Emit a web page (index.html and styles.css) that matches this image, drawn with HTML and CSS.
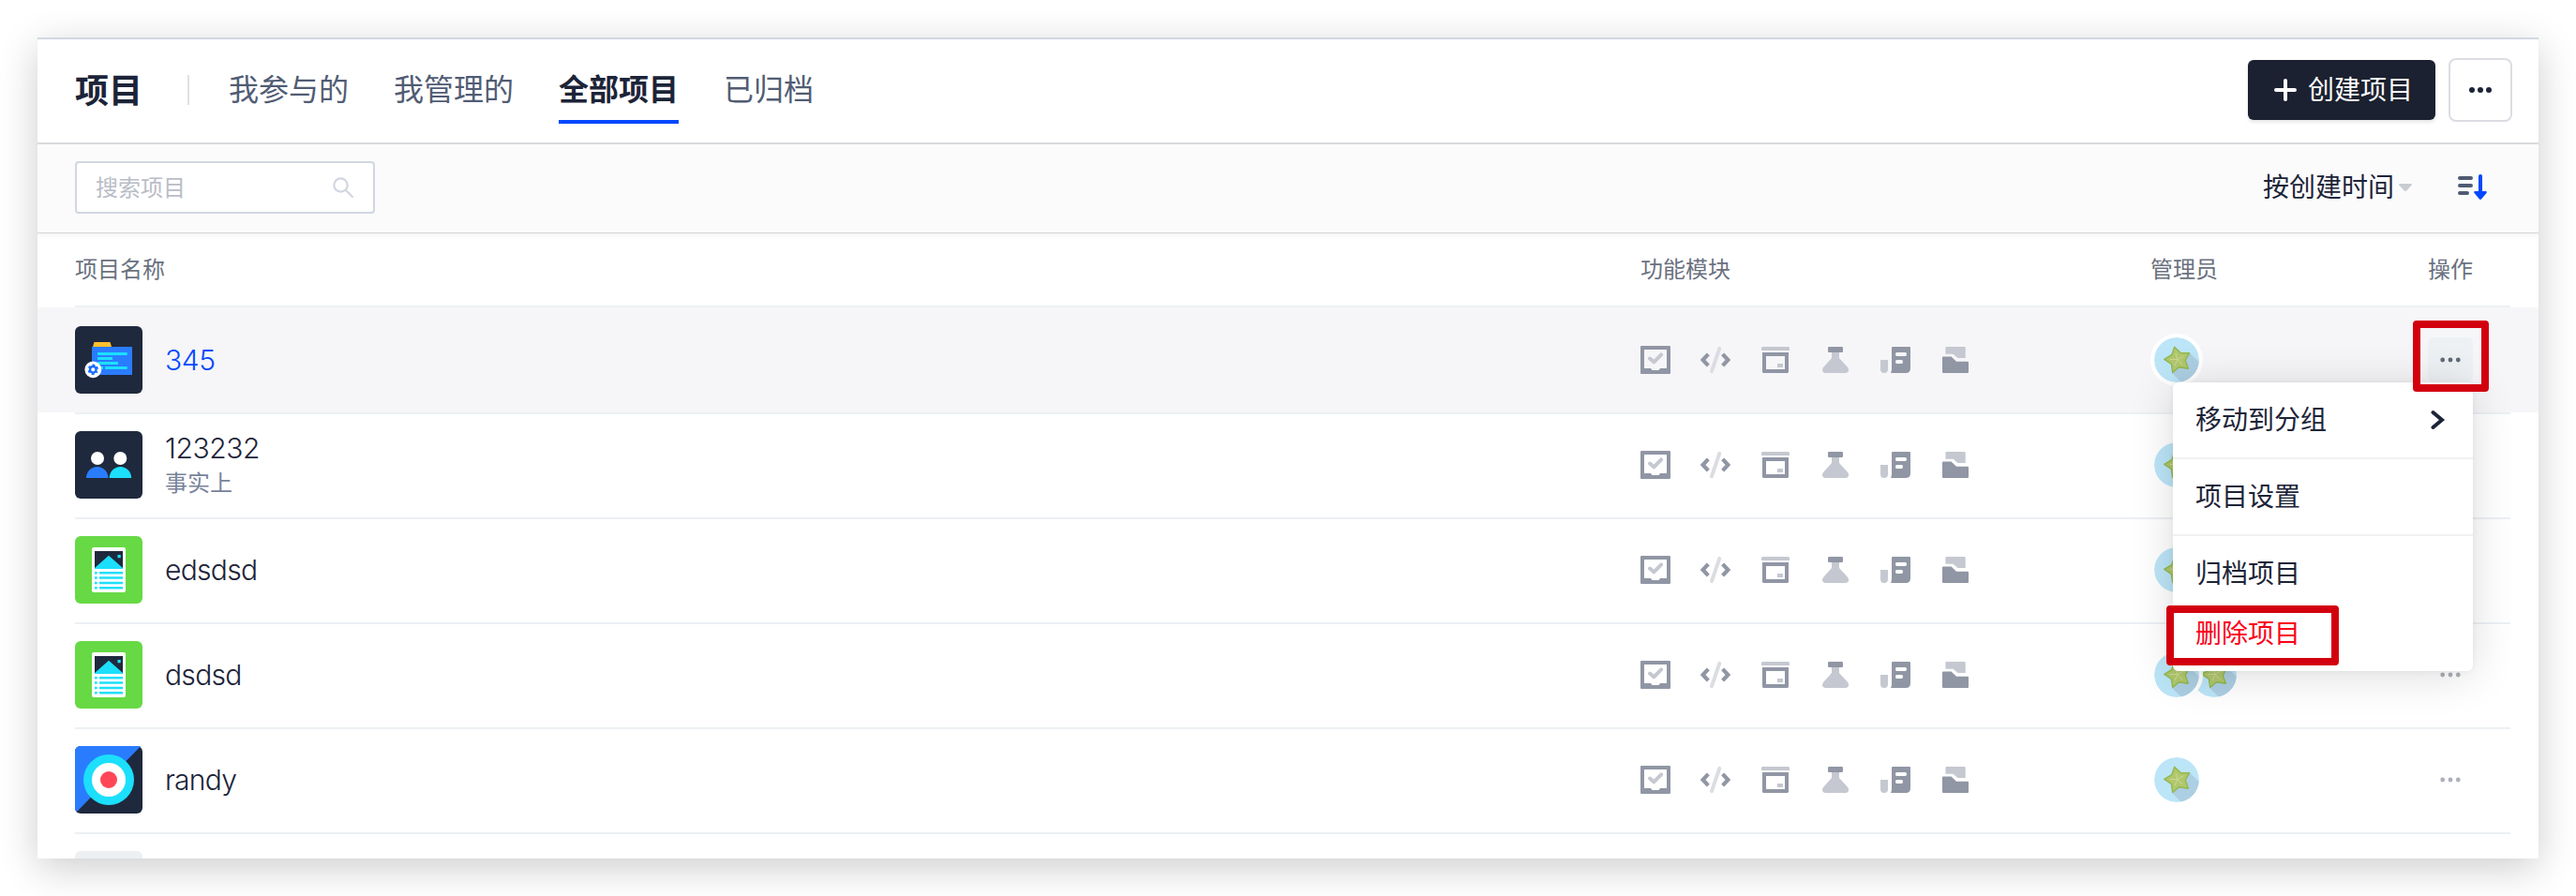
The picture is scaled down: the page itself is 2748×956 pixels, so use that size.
FILE: index.html
```html
<!DOCTYPE html>
<html lang="zh-CN">
<head>
<meta charset="utf-8">
<title>项目</title>
<link rel="stylesheet" href="styles.css">
</head>
<body>
<svg class="defs" aria-hidden="true">
  <symbol id="modules" viewBox="0 0 352 32">
    <g>
      <path class="dark" fill-rule="evenodd" d="M1 1H31Q32 1 32 2V30Q32 31 31 31H1Q0 31 0 30V2Q0 1 1 1ZM4 5V25H11L12.5 27H19.5L21 25H28V5Z"/>
      <path class="light-line" d="M10 14.5L14.3 18.3L22.2 10.3"/>
    </g>
    <g transform="translate(64 0)">
      <path class="slash" d="M20.3 3.8L12 28.2"/>
      <path class="dark-line" d="M8.3 9.8L2.6 16L8.3 22.2M23.7 9.8L29.4 16L23.7 22.2"/>
    </g>
    <g transform="translate(128 0)">
      <path class="light" d="M2 2H30L31 3V6H1V3Z"/>
      <path class="dark" fill-rule="evenodd" d="M2 8H30V29L29 30H3L2 29ZM6 12V26H26V12Z"/>
      <path class="light" d="M18 20H24V24H18Z"/>
    </g>
    <g transform="translate(192 0)">
      <path class="light" d="M12 8H20V14L29.4 24.3Q31 27 29.3 29Q28 30 26.5 30H5.5Q4 30 2.8 29Q1.200 27 2.8 24.3L12 14Z"/>
      <rect class="dark" x="8" y="2" width="16" height="6" rx="1.200"/>
    </g>
    <g transform="translate(256 0)">
      <path class="light" d="M0 16H8V26Q8 30 4 30T0 26Z"/>
      <path class="dark" fill-rule="evenodd" d="M13 2H31Q32 2 32 3V25Q32 30 27 30H11Q12 28 12 26V3Q12 2 13 2ZM17.500 8Q16 8 16 10T17.500 12H26.500Q28 12 28 10T26.500 8ZM17.500 16Q16 16 16 18T17.500 20H22.500Q24 20 24 18T22.500 16Z"/>
    </g>
    <g transform="translate(320 0)">
      <path class="light" d="M6.500 2H25.500Q26.700 2 26.700 3V14H18.500L13.500 9.800H5.400V3Q5.400 2 6.500 2Z"/>
      <path class="dark" d="M3 12.500H11.500L17 17.700H29Q30 17.700 30 18.700V29Q30 30 29 30H3Q2 30 2 29V13.500Q2 12.500 3 12.500Z"/>
    </g>
  </symbol>
  <symbol id="carambola" viewBox="0 0 48 48">
    <circle cx="24" cy="24" r="24" fill="#bce5f8"/>
    <path d="M38 16.500L47.900 26A24 24 0 0 1 28.500 47.600L19.500 38.200Z" fill="#adcfe3"/>
    <path d="M21.700 10.200L28.200 16.500L37.500 16.700L33.300 24.500L36.300 33.300L26.500 31.800L19.700 37.500L18.400 28.500L10.800 23.300L18.700 18.700Z" fill="#b1c76d" stroke="#91b84c" stroke-width="1.400" stroke-linejoin="round"/>
    <path d="M25 23.500L23 17M25 23.500L31 20M25 23.500L30 29M25 23.500L22 30M25 23.500L17 23.500" stroke="#ccd995" stroke-width="1"/>
  </symbol>
  <symbol id="report" viewBox="0 0 72 72">
    <rect width="72" height="72" rx="6" fill="#67d945"/>
    <rect x="18" y="12" width="36" height="48" rx="2" fill="#fff"/>
    <path d="M21 16H51V35H21Z" fill="#1f293d"/>
    <path d="M36 20.700L51 34V35H21V34ZM45.500 20H48.700V23.200H45.500Z" fill="#1cdffc"/>
    <path d="M21 39.200H23.700M26 39.200H51M21 44.500H23.700M26 44.500H51M21 49.900H23.700M26 49.900H51M21 55.200H23.700M26 55.200H51" stroke="#1cdffc" stroke-width="2.500"/>
  </symbol>
  <symbol id="dots" viewBox="0 0 48 48">
    <circle cx="15.700" cy="24" r="2.400"/><circle cx="24" cy="24" r="2.400"/><circle cx="32.300" cy="24" r="2.400"/>
  </symbol>
</svg>

<main class="window">
  <header class="header">
    <h1 class="title">项目</h1>
    <span class="divider"></span>
    <nav class="tabs">
      <a class="tab">我参与的</a>
      <a class="tab">我管理的</a>
      <a class="tab active">全部项目</a>
      <a class="tab">已归档</a>
    </nav>
    <button class="create">
      <svg width="24" height="24" viewBox="0 0 24 24"><path d="M2 12H22M12 2V22" stroke="#fff" stroke-width="4" stroke-linecap="round"/></svg>
      <span>创建项目</span>
    </button>
    <button class="more">
      <svg width="24" height="6" viewBox="0 0 24 6"><circle cx="3" cy="3" r="3"/><circle cx="12" cy="3" r="3"/><circle cx="21" cy="3" r="3"/></svg>
    </button>
  </header>

  <section class="toolbar">
    <div class="search">
      <span>搜索项目</span>
      <svg width="24" height="24" viewBox="0 0 24 24"><circle cx="9.500" cy="9.500" r="7.200"/><path d="M15 15L22 22"/></svg>
    </div>
    <div class="sort">
      <span>按创建时间</span>
      <svg class="caret" width="14" height="8" viewBox="0 0 14 8"><path d="M1 0H13Q14.500 .5 13.500 1.700L8.200 7.500Q7 8.400 5.800 7.500L.5 1.700Q-.5 .5 1 0Z"/></svg>
      <svg class="order" width="32" height="28" viewBox="0 0 32 28">
        <path d="M2 4H14M2 12H14M2 20H10" stroke="#4f5b73" stroke-width="4" stroke-linecap="round"/>
        <path d="M24 2V22" stroke="#0348ff" stroke-width="4" stroke-linecap="round"/>
        <path d="M18 18H30Q31.500 18.500 30.500 20L25.200 26.300Q24 27.500 22.800 26.300L17.500 20Q16.500 18.500 18 18Z" fill="#0348ff"/>
      </svg>
    </div>
  </section>

  <section class="table">
    <div class="thead">
      <span>项目名称</span><span>功能模块</span><span>管理员</span><span>操作</span>
    </div>

    <div class="row hover">
      <div class="cells">
        <div class="project">
          <svg class="logo" viewBox="0 0 72 72">
            <rect width="72" height="72" rx="6" fill="#1f293d"/>
            <path d="M20.500 17H37.500L39 22H19Z" fill="#ffc02e"/>
            <path d="M18 22H61V52H18Z" fill="#2a7cff"/>
            <path d="M24 29.500H55.700M24 34.500H40M24 39.500H46M24 44.500H30M32 44.500H55.700" stroke="#1cdffc" stroke-width="3"/>
            <circle cx="19.300" cy="46.300" r="8.900" fill="#fff"/>
            <circle cx="19.300" cy="46.300" r="3.300" fill="none" stroke="#176dff" stroke-width="2.400"/>
            <circle cx="19.300" cy="46.300" r="4.900" fill="none" stroke="#176dff" stroke-width="1.700" stroke-dasharray="2.600 2.530" stroke-dashoffset="1.300" transform="rotate(30 19.300 46.300)"/>
          </svg>
          <div class="names"><span class="name">345</span></div>
        </div>
        <svg class="modules"><use href="#modules"/></svg>
        <div class="people"><svg class="avatar"><use href="#carambola"/></svg></div>
        <div class="ops"><svg><use href="#dots"/></svg></div>
      </div>
    </div>

    <div class="row">
      <div class="cells">
        <div class="project">
          <svg class="logo" viewBox="0 0 72 72">
            <rect width="72" height="72" rx="6" fill="#1f293d"/>
            <circle cx="24" cy="29" r="7" fill="#fff"/><circle cx="48.300" cy="29" r="7" fill="#fff"/>
            <path d="M12 50A11.700 12 0 0 1 35.400 50Z" fill="#2a7cff"/>
            <path d="M36.700 50A11.700 12 0 0 1 60.100 50Z" fill="#1cdffc"/>
          </svg>
          <div class="names"><span class="name">123232</span><span class="desc">事实上</span></div>
        </div>
        <svg class="modules"><use href="#modules"/></svg>
        <div class="people"><svg class="avatar"><use href="#carambola"/></svg></div>
        <div class="ops"><svg><use href="#dots"/></svg></div>
      </div>
    </div>

    <div class="row">
      <div class="cells">
        <div class="project">
          <svg class="logo"><use href="#report"/></svg>
          <div class="names"><span class="name letters">edsdsd</span></div>
        </div>
        <svg class="modules"><use href="#modules"/></svg>
        <div class="people"><svg class="avatar"><use href="#carambola"/></svg></div>
        <div class="ops"><svg><use href="#dots"/></svg></div>
      </div>
    </div>

    <div class="row">
      <div class="cells">
        <div class="project">
          <svg class="logo"><use href="#report"/></svg>
          <div class="names"><span class="name letters">dsdsd</span></div>
        </div>
        <svg class="modules"><use href="#modules"/></svg>
        <div class="people"><svg class="avatar"><use href="#carambola"/></svg><svg class="avatar"><use href="#carambola"/></svg></div>
        <div class="ops"><svg><use href="#dots"/></svg></div>
      </div>
    </div>

    <div class="row">
      <div class="cells">
        <div class="project">
          <svg class="logo" viewBox="0 0 72 72">
            <rect width="72" height="72" rx="6" fill="#1f293d"/>
            <path d="M6 0H70.200L1.800 70.200Q0 69 0 66V6Q0 0 6 0Z" fill="#2a7cff"/>
            <circle cx="36" cy="36" r="27" fill="#1cdffc"/><circle cx="36" cy="36" r="18" fill="#fff"/><circle cx="36" cy="36" r="9" fill="#ff4757"/>
          </svg>
          <div class="names"><span class="name letters">randy</span></div>
        </div>
        <svg class="modules"><use href="#modules"/></svg>
        <div class="people"><svg class="avatar"><use href="#carambola"/></svg></div>
        <div class="ops"><svg><use href="#dots"/></svg></div>
      </div>
    </div>

    <div class="row">
      <div class="cells">
        <div class="project"><span class="logo blank"></span></div>
      </div>
    </div>
  </section>
</main>

<div class="menu">
  <div class="group">
    <div class="item"><span>移动到分组</span>
      <svg width="16" height="22" viewBox="0 0 16 22"><path d="M2.500 3L12 11L2.500 19" fill="none" stroke="#1c2438" stroke-width="4" stroke-linecap="round"/></svg>
    </div>
  </div>
  <div class="group"><div class="item"><span>项目设置</span></div></div>
  <div class="group"><div class="item"><span>归档项目</span></div><div class="item danger"><span>删除项目</span></div></div>
</div>
<div class="mark mark-ops"></div>
<div class="mark mark-delete"></div>
</body>
</html>
```
FILE: styles.css
```css
* { box-sizing: border-box; }

body {
  margin: 0;
  width: 2748px;
  height: 956px;
  padding: 40px;
  overflow: hidden;
  position: relative;
  background: #fff;
  color: #1c2438;
  font-family: "Noto Sans CJK SC", sans-serif;
  font-size: 28px;
}

.defs { position: absolute; width: 0; height: 0; }

.window {
  width: 2668px;
  height: 876px;
  overflow: hidden;
  background: #fff;
  border-top: 2px solid #d2d7e3;
  box-shadow: 0 10px 40px rgba(0, 0, 0, .2);
}

.header {
  display: flex;
  align-items: center;
  height: 112px;
  padding: 0 28px 2px 40px;
  border-bottom: 2px solid #dadcde;
}
.title { margin: 0; width: 120px; padding-bottom: 4px; font-size: 36px; font-weight: 700; line-height: 1; }
.divider { width: 2px; height: 32px; background: #e0e1e5; }
.tabs { display: flex; gap: 48px; margin-left: 42px; flex: 1; align-self: stretch; }
.tab { font-size: 32px; color: #515c74; height: 90px; line-height: 103px; }
.tab.active { color: #1c2438; font-weight: 700; border-bottom: 4px solid #0348ff; }

.create, .more { display: flex; align-items: center; justify-content: center; font: inherit; padding: 0; }
.create {
  width: 200px;
  height: 64px;
  gap: 12px;
  border: 0;
  border-radius: 6px;
  background: #1b2130;
  color: #fff;
  line-height: 60px;
  padding-left: 4px;
  box-shadow: 0 2px 4px rgba(0, 0, 0, .12);
}
.create span { padding-bottom: 4px; }
.more {
  width: 68px;
  height: 68px;
  margin-left: 14px;
  border: 2px solid #dcdde2;
  border-radius: 8px;
  background: #fff;
  fill: #1c2438;
}

.toolbar {
  position: relative;
  display: flex;
  align-items: center;
  justify-content: space-between;
  height: 95px;
  padding: 0 54px 3px 40px;
  background: #fbfbfb;
  border-bottom: 1px solid #d5d6d9;
  box-shadow: 0 2px 6px rgba(0, 0, 0, .06);
}
.search {
  display: flex;
  align-items: center;
  justify-content: space-between;
  width: 320px;
  height: 56px;
  padding: 0 20px;
  border: 2px solid #d1d6e0;
  border-radius: 4px;
  background: #fff;
  color: #b9bdc7;
  font-size: 24px;
  line-height: 49px;
}
.search span { padding-bottom: 3px; }
.search svg { fill: none; stroke: #d1d6e0; stroke-width: 2.2; stroke-linecap: round; }
.sort { display: flex; align-items: center; line-height: 52px; }
.sort span { padding-bottom: 3px; }
.caret { margin-left: 5px; fill: #c9ccd1; }
.order { margin-left: 49px; }

.thead, .cells {
  display: grid;
  grid-template-columns: 1670px 544px 292px 1fr;
  align-items: center;
}
.thead {
  height: 79px;
  margin: 0 30px 0 40px;
  padding-bottom: 4px;
  border-bottom: 2px solid #ecf0f4;
  color: #6a7180;
  font-size: 24px;
}
.thead span:nth-child(4) { padding-left: 4px; }
.row { height: 112px; padding: 0 30px 0 40px; }
.cells { height: 112px; }
.row + .row .cells { box-shadow: inset 0 2px #ecf0f4; }
.row.hover { background: #f6f6f9; }

.project { display: flex; align-items: center; gap: 24px; }
.logo { width: 72px; height: 72px; }
.blank { display: block; border-radius: 6px; background: #edf0f3; }
.names { display: flex; flex-direction: column; }
.name { font: 350 30px/38px Inter, "Liberation Sans", sans-serif; letter-spacing: -.4px; }
.letters { letter-spacing: -.7px; }
.desc { font-size: 24px; line-height: 34px; padding-bottom: 2px; color: #78839a; }
.hover .name { color: #0348ff; }

.modules { width: 352px; height: 32px; }
.dark { fill: #9096a4; }
.light { fill: #c5c8d0; }
.dark-line { fill: none; stroke: #9096a4; stroke-width: 4.2; }
.light-line { fill: none; stroke: #c5c8d0; stroke-width: 4; stroke-linecap: round; stroke-linejoin: round; }
.slash { stroke: #dbdde2; stroke-width: 4; stroke-linecap: round; }

.people { display: flex; }
.avatar {
  position: relative;
  z-index: 1;
  width: 56px;
  height: 56px;
  border: 4px solid #fff;
  border-radius: 50%;
  background: #fff;
}
.avatar + .avatar { z-index: 0; margin-left: -16px; }

.ops svg { display: block; width: 48px; height: 48px; margin-left: 4px; border-radius: 6px; fill: #adb0ba; }
.hover .ops svg { background: #edf1f4; fill: #636a79; }

.menu {
  position: absolute;
  z-index: 2;
  left: 2318px;
  top: 408px;
  width: 320px;
  border-radius: 6px;
  background: #fff;
  box-shadow: 0 4px 48px rgba(0, 0, 0, .14), 0 0 6px rgba(0, 0, 0, .06);
}
.group { padding: 8px 0; }
.group + .group { border-top: 2px solid #f1f1f2; }
.item {
  display: flex;
  align-items: center;
  justify-content: space-between;
  height: 64px;
  padding: 0 29px 0 24px;
  line-height: 60px;
}
.item span { padding-bottom: 4px; }
.danger { color: #fb0019; }

.mark { position: absolute; z-index: 3; border: 8px solid #d2000f; border-radius: 4px; }
.mark-ops { left: 2574px; top: 342px; width: 81px; height: 76px; }
.mark-delete { left: 2311px; top: 646px; width: 184px; height: 64px; }
```
